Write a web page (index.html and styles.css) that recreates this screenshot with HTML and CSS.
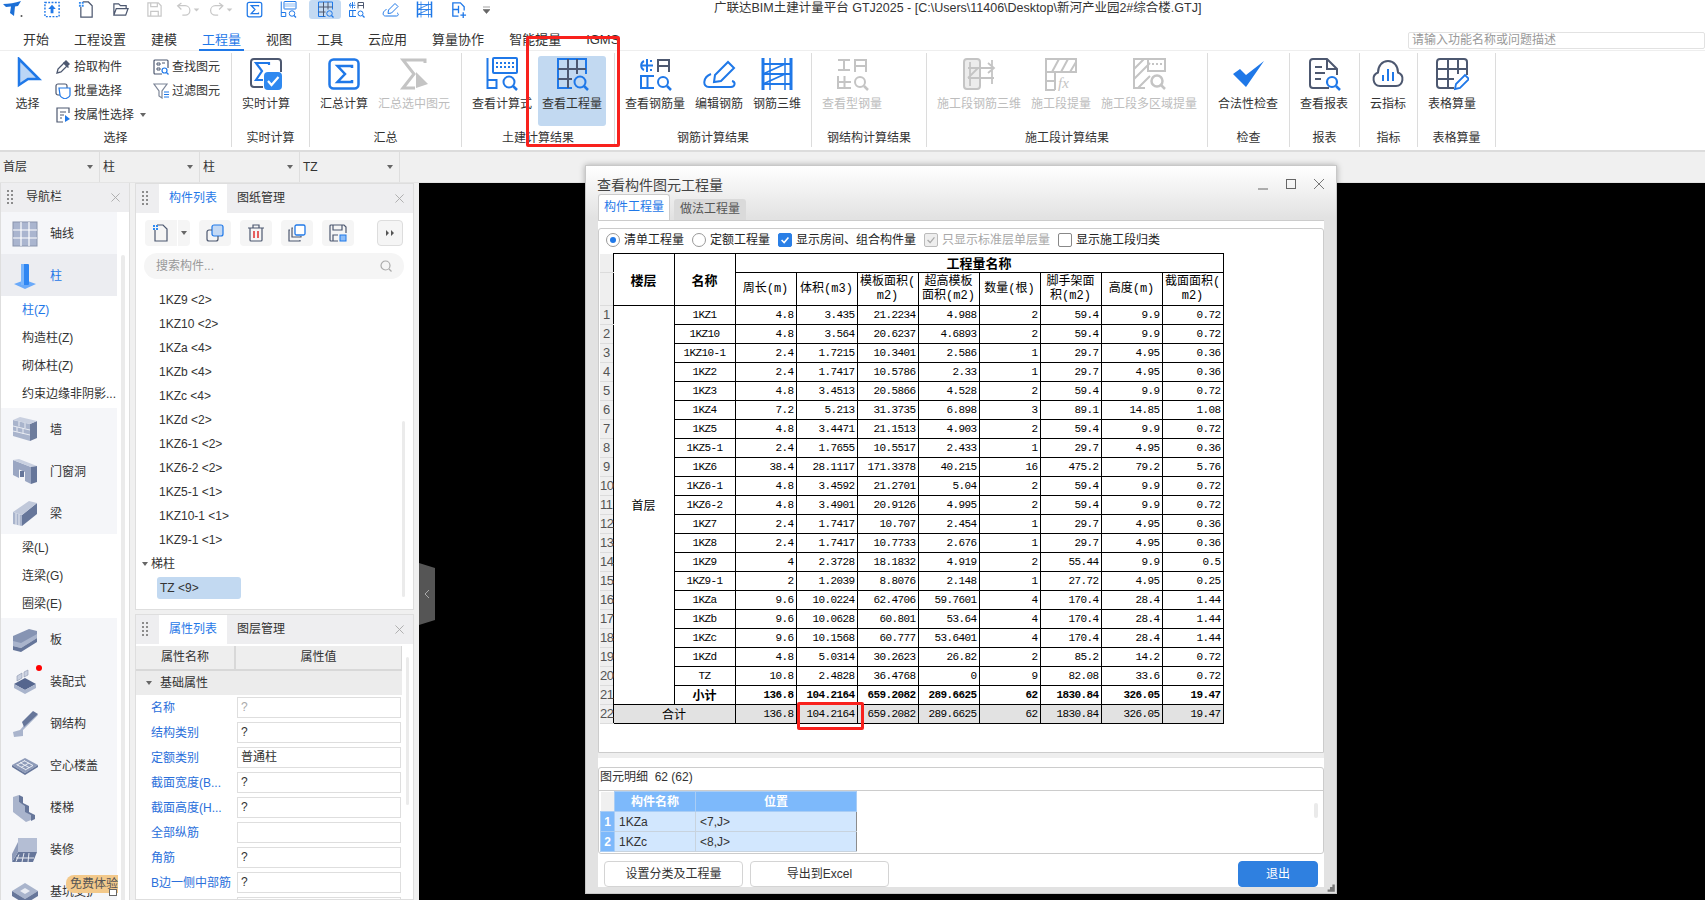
FILE: index.html
```html
<!DOCTYPE html>
<html lang="zh-CN">
<head>
<meta charset="utf-8">
<title>广联达BIM土建计量平台 GTJ2025</title>
<link rel="stylesheet" href="styles.css">
</head>
<body>
<svg class="sprite" xmlns="http://www.w3.org/2000/svg">
  <symbol id="sum" viewBox="0 0 34 34"><rect x="2.5" y="2.5" width="29" height="29" rx="4" fill="none" stroke="#1f78e8" stroke-width="2.5"/><path d="M25 11V9H10.500l7.500 8-7.500 8H25v-2" fill="none" stroke="#1f78e8" stroke-width="2.500"/></symbol>
  <symbol id="sumg" viewBox="0 0 34 34"><path d="M28 6V3H6l11 14L6 31h12" fill="none" stroke="#c4c4c4" stroke-width="3"/><path d="M19 15l12 12-12 4z" fill="#c4c4c4"/></symbol>
  <symbol id="calc" viewBox="0 0 34 34"><path d="M2.500 1v30h9v-8h-9" fill="none" stroke="#1f78e8" stroke-width="2"/><rect x="8" y="1" width="24" height="15" rx="1" fill="none" stroke="#1f78e8" stroke-width="2"/><path d="M11 5h2v2h-2zM15 5h2v2h-2zM19 5h2v2h-2zM23 5h2v2h-2zM27 5h2v2h-2zM11 9h2v2h-2zM15 9h2v2h-2zM19 9h2v2h-2zM23 9h2v2h-2zM27 9h2v2h-2z" fill="#1f78e8"/><circle cx="24" cy="25" r="5.500" fill="none" stroke="#1f78e8" stroke-width="2"/><path d="M28 29l4 4" stroke="#1f78e8" stroke-width="2.500"/></symbol>
  <symbol id="qty" viewBox="0 0 34 34"><path d="M17 31H3V2h28v15" fill="none" stroke="#1f78e8" stroke-width="2"/><path d="M3 12h28M3 22h14M13 2v29M22 2v15" fill="none" stroke="#4d5870" stroke-width="2"/><circle cx="25" cy="25" r="5.500" fill="none" stroke="#1f78e8" stroke-width="2"/><path d="M29 29l4 4" stroke="#1f78e8" stroke-width="2.500"/></symbol>
  <symbol id="rebar" viewBox="0 0 34 34"><path d="M9 2v13M3 8.500h12" stroke="#1f78e8" stroke-width="2" fill="none"/><path d="M6 4a5 5 0 0 0 0 9M12 4h2M12 13h2" stroke="#1f78e8" stroke-width="2" fill="none"/><path d="M20 15V3h11v12M20 9h11" stroke="#4d5870" stroke-width="2" fill="none"/><path d="M3 19v12h13M3 31V19h13M9.500 19v12" stroke="#1f78e8" stroke-width="2" fill="none"/><circle cx="25" cy="25" r="5" fill="none" stroke="#1f78e8" stroke-width="2"/><path d="M29 29l4 4" stroke="#1f78e8" stroke-width="2.500"/></symbol>
  <symbol id="edit" viewBox="0 0 34 34"><path d="M12 25l1-7L26 5l6 6-13 13z" fill="none" stroke="#1f78e8" stroke-width="2"/><path d="M9 17C1 20 0 30 7 30h22c4 0 5-5 1-6" fill="none" stroke="#1f78e8" stroke-width="2"/></symbol>
  <symbol id="ladder" viewBox="0 0 34 34"><path d="M3 1v32M31 1v32" stroke="#1f78e8" stroke-width="3"/><path d="M10 1v32M25 1v32" stroke="#1f78e8" stroke-width="1.500"/><path d="M3 7h28M3 17h28M3 27h28M3 17L25 7M3 27l22-10" stroke="#1f78e8" stroke-width="1.800" fill="none"/></symbol>
  <symbol id="steel" viewBox="0 0 34 34"><path d="M3 3h12M3 13h12M9 3v10M20 15V3h11v12M20 9h11M3 19v12h13M3 25h13M9.500 19v12" stroke="#c4c4c4" stroke-width="2" fill="none"/><circle cx="25" cy="25" r="5" fill="none" stroke="#c4c4c4" stroke-width="2"/><path d="M29 29l4 4" stroke="#c4c4c4" stroke-width="2.500"/></symbol>
  <symbol id="seg1" viewBox="0 0 34 34"><rect x="2" y="2" width="16" height="30" rx="3" fill="#ececec" stroke="#c4c4c4" stroke-width="2"/><path d="M8 5v24M18 5v24M30 3v24M6 11h26M6 21h26M6 21l10-10M26 6l6 5-6 5" stroke="#c4c4c4" stroke-width="1.800" fill="none"/></symbol>
  <symbol id="seg3" viewBox="0 0 34 34"><path d="M13 31H2V2h16M2 12L12 2M2 22L18 6M6 31l12-12" stroke="#c4c4c4" stroke-width="2" fill="none"/><rect x="16" y="2" width="17" height="12" fill="none" stroke="#c4c4c4" stroke-width="2"/><path d="M20 6h2v2h-2zM24 6h2v2h-2zM28 6h2v2h-2z" fill="#c4c4c4"/><circle cx="25" cy="24" r="5.500" fill="none" stroke="#c4c4c4" stroke-width="2.500"/><path d="M29 28l4 4" stroke="#c4c4c4" stroke-width="2.500"/></symbol>
  <symbol id="check" viewBox="0 0 34 34"><path d="M2 17l7-5 6 6L33 4 15 30z" fill="#1f78e8"/></symbol>
  <symbol id="report" viewBox="0 0 34 34"><path d="M22 31H6a3 3 0 0 1-3-3V5a3 3 0 0 1 3-3h14l10 10v6" fill="none" stroke="#4d5870" stroke-width="2"/><path d="M20 2v10h10M8 10h7M8 16h10M8 22h6" fill="none" stroke="#4d5870" stroke-width="2"/><circle cx="25" cy="25" r="5" fill="none" stroke="#1f78e8" stroke-width="2.200"/><path d="M29 29l4 4" stroke="#1f78e8" stroke-width="2.500"/></symbol>
  <symbol id="cloud" viewBox="0 0 34 34"><path d="M9 29a7 7 0 0 1-2-13.500C7 9 11 4 17 4s10 5 10 11.500A7 7 0 0 1 25 29z" fill="none" stroke="#4d5870" stroke-width="2"/><path d="M11 18h2v6h-2zM16 12h2v12h-2zM21 15h2v9h-2z" fill="#1f78e8"/></symbol>
  <symbol id="gridedit" viewBox="0 0 34 34"><path d="M19 31H5a3 3 0 0 1-3-3V5a3 3 0 0 1 3-3h24a3 3 0 0 1 3 3v13" fill="none" stroke="#4d5870" stroke-width="2"/><path d="M2 12h30M2 22h17M13 2v29M23 2v15" stroke="#4d5870" stroke-width="2" fill="none"/><path d="M20 32l1-5 9-9 4 4-9 9z" fill="none" stroke="#1f78e8" stroke-width="1.800"/></symbol>
  <symbol id="realtime" viewBox="0 0 34 34"><path d="M14 30H5a3 3 0 0 1-3-3V5a3 3 0 0 1 3-3h24a3 3 0 0 1 3 3v10" fill="none" stroke="#4d5870" stroke-width="2"/><path d="M20 8V6H7l6 8-6 9h7" fill="none" stroke="#1f78e8" stroke-width="2.200"/><rect x="15" y="15" width="18" height="18" rx="4" fill="#2f89f0"/><path d="M19 24l3.500 4 7-8" fill="none" stroke="#fff" stroke-width="2.200"/></symbol>
  <symbol id="grip" viewBox="0 0 8 16"><path d="M1 1h2v2H1zM5 1h2v2H5zM1 5h2v2H1zM5 5h2v2H5zM1 9h2v2H1zM5 9h2v2H5zM1 13h2v2H1zM5 13h2v2H5z" fill="#8c8c8c"/></symbol>
  <symbol id="cross" viewBox="0 0 10 10"><path d="M.500.500l9 9M9.500.500l-9 9" stroke="#a8a8a8" stroke-width="1" fill="none"/></symbol>
</svg>

<div class="app">
  <header class="qat">
    <span class="logo"><svg viewBox="0 0 20 17" width="20" height="17"><path d="M0 3C6 3 12 2 18 0l-3 5-3 .5L11 15 7 12l1-6.500L3 6z" fill="#1c6fd6"/><circle cx="18.500" cy="15" r="1" fill="#555"/></svg></span>
    <span class="q"><svg viewBox="0 0 18 18"><rect x="1" y="1.500" width="15" height="15" fill="none" stroke="#1f78e8" stroke-width="1.500" stroke-dasharray="2 1.500"/><path d="M8.500 4l4 4.500H10V13H7V8.500H4.500z" fill="#1f78e8"/></svg></span>
    <span class="q"><svg viewBox="0 0 18 18"><path d="M3 6v11h12V5l-4-4H5" fill="none" stroke="#4d5870" stroke-width="1.300"/><path d="M1 1h2v2H1zM4 1h2v2H4zM1 4h2v2H1zM4 4h2v2H4z" fill="#2f89f0"/></svg></span>
    <span class="q"><svg viewBox="0 0 18 18"><path d="M2 15V3h5l2 2h6v3M2 15l2.500-7H17l-2.500 7z" fill="none" stroke="#4d5870" stroke-width="1.300"/></svg></span>
    <span class="q"><svg viewBox="0 0 18 18"><path d="M2 2h11l3 3v11H2zM5 2v4h7V2M5 16v-5h8v5" fill="none" stroke="#c8c8c8" stroke-width="1.300"/></svg></span>
    <span class="q hist"><svg viewBox="0 0 26 18"><path d="M6 9L2 5l4-3M2 5h8a5 5 0 0 1 0 10H7" fill="none" stroke="#c8c8c8" stroke-width="1.300"/><path d="M19 8h6l-3 3z" fill="#c8c8c8"/></svg></span>
    <span class="q hist"><svg viewBox="0 0 26 18"><path d="M11 9l4-4-4-3M15 5H7a5 5 0 0 0 0 10h3" fill="none" stroke="#c8c8c8" stroke-width="1.300"/><path d="M19 8h6l-3 3z" fill="#c8c8c8"/></svg></span>
    <span class="q"><svg><use href="#sum"/></svg></span>
    <span class="q"><svg><use href="#calc"/></svg></span>
    <span class="q on"><svg><use href="#qty"/></svg></span>
    <span class="q"><svg><use href="#rebar"/></svg></span>
    <span class="q"><svg><use href="#edit"/></svg></span>
    <span class="q"><svg><use href="#ladder"/></svg></span>
    <span class="q"><svg viewBox="0 0 18 18"><path d="M9 16H3V2h8l4 4v4M3 9h6M9 5v8M11 15h6M14 12v6" fill="none" stroke="#1f78e8" stroke-width="1.400"/></svg></span>
    <span class="qmore"><svg viewBox="0 0 7 8" width="7" height="8"><path d="M0 1h7M0 3.500h7l-3.500 4z" fill="#666" stroke="#666" stroke-width=".6"/></svg></span>
    <span class="apptitle">广联达BIM土建计量平台 GTJ2025 - [C:\Users\11406\Desktop\新河产业园2#综合楼.GTJ]</span>
  </header>

  <nav class="tabs">
    <span class="tab">开始</span><span class="tab">工程设置</span><span class="tab">建模</span><span class="tab active">工程量</span><span class="tab">视图</span><span class="tab">工具</span><span class="tab">云应用</span><span class="tab">算量协作</span><span class="tab">智能提量</span><span class="tab">IGMS</span>
    <span class="fsearch">请输入功能名称或问题描述</span>
  </nav>

  <section class="ribbon">
    <div class="grp g1">
      <div class="grow">
        <div class="btn sel"><svg class="ic" viewBox="0 0 34 34"><path d="M8 2l20 20H17l-9 6z" fill="#bcd6f6" stroke="#1f78e8" stroke-width="2.500"/></svg><span>选择</span></div>
        <div class="tools t1">
          <div class="tool"><svg viewBox="0 0 16 16"><path d="M2 14l1-4 6-6 3 3-6 6z" fill="none" stroke="#4d5870" stroke-width="1.300"/><path d="M9 3l2-2 4 4-2 2 1 1-1 1-5-5 1-1z" fill="#4d5870"/></svg><span>拾取构件</span></div>
          <div class="tool"><svg viewBox="0 0 16 16"><rect x="1" y="1" width="11" height="11" rx="2" fill="none" stroke="#4d5870" stroke-width="1.200"/><path d="M4 5h11v7c0 2-3 3-5 4-2-1-5-2-5-4z" fill="#fff" stroke="#1f78e8" stroke-width="1.200"/></svg><span>批量选择</span></div>
          <div class="tool"><svg viewBox="0 0 16 16"><path d="M14 6V1H2v14h6M5 5h6M5 8h4M5 11h2" fill="none" stroke="#4d5870" stroke-width="1.200"/><path d="M10 8l5 4-5 3z" fill="#1f78e8"/></svg><span>按属性选择</span><i class="caret"></i></div>
        </div>
        <div class="tools t2">
          <div class="tool"><svg viewBox="0 0 16 16"><path d="M9 15H2a1 1 0 0 1-1-1V2a1 1 0 0 1 1-1h12a1 1 0 0 1 1 1v7" fill="none" stroke="#4d5870" stroke-width="1.200"/><path d="M4 4h3v2H4zM9 4h3M4 9h3v2H4z" fill="none" stroke="#4d5870"/><circle cx="11.500" cy="11.500" r="2.500" fill="none" stroke="#1f78e8" stroke-width="1.200"/><path d="M13.500 13.500l2 2" stroke="#1f78e8" stroke-width="1.200"/></svg><span>查找图元</span></div>
          <div class="tool"><svg viewBox="0 0 16 16"><path d="M1 1h13L9 8v7L6 13V8z" fill="none" stroke="#7d8698" stroke-width="1.200"/><path d="M11 9h5M11 11.500h5M11 14h5" stroke="#1f78e8" stroke-width="1.200"/></svg><span>过滤图元</span></div>
        </div>
      </div>
      <div class="glabel">选择</div>
    </div>
    <div class="grp g2"><div class="grow"><div class="btn"><svg class="ic"><use href="#realtime"/></svg><span>实时计算</span></div></div><div class="glabel">实时计算</div></div>
    <div class="grp g3"><div class="grow"><div class="btn"><svg class="ic"><use href="#sum"/></svg><span>汇总计算</span></div><div class="btn off"><svg class="ic"><use href="#sumg"/></svg><span>汇总选中图元</span></div></div><div class="glabel">汇总</div></div>
    <div class="grp g4"><div class="grow"><div class="btn"><svg class="ic"><use href="#calc"/></svg><span>查看计算式</span></div><div class="btn on"><svg class="ic"><use href="#qty"/></svg><span>查看工程量</span></div></div><div class="glabel">土建计算结果</div></div>
    <div class="grp g5"><div class="grow"><div class="btn"><svg class="ic"><use href="#rebar"/></svg><span>查看钢筋量</span></div><div class="btn"><svg class="ic"><use href="#edit"/></svg><span>编辑钢筋</span></div><div class="btn"><svg class="ic"><use href="#ladder"/></svg><span>钢筋三维</span></div></div><div class="glabel">钢筋计算结果</div></div>
    <div class="grp g6"><div class="grow"><div class="btn off"><svg class="ic"><use href="#steel"/></svg><span>查看型钢量</span></div></div><div class="glabel">钢结构计算结果</div></div>
    <div class="grp g7"><div class="grow"><div class="btn off"><svg class="ic"><use href="#seg1"/></svg><span>施工段钢筋三维</span></div><div class="btn off"><svg class="ic" viewBox="0 0 34 34"><path d="M2 2h30v13H2zM2 15v18h9M11 15v18M2 24h9M8 15L15 2M17 15L24 2M26 15l6-10" stroke="#c4c4c4" stroke-width="2" fill="none"/><text x="14" y="31" class="fx">fx</text></svg><span>施工段提量</span></div><div class="btn off"><svg class="ic"><use href="#seg3"/></svg><span>施工段多区域提量</span></div></div><div class="glabel">施工段计算结果</div></div>
    <div class="grp g8"><div class="grow"><div class="btn"><svg class="ic"><use href="#check"/></svg><span>合法性检查</span></div></div><div class="glabel">检查</div></div>
    <div class="grp g9"><div class="grow"><div class="btn"><svg class="ic"><use href="#report"/></svg><span>查看报表</span></div></div><div class="glabel">报表</div></div>
    <div class="grp g10"><div class="grow"><div class="btn"><svg class="ic"><use href="#cloud"/></svg><span>云指标</span></div></div><div class="glabel">指标</div></div>
    <div class="grp g11"><div class="grow"><div class="btn"><svg class="ic"><use href="#gridedit"/></svg><span>表格算量</span></div></div><div class="glabel">表格算量</div></div>
  </section>

  <div class="combos">
    <div class="combo">首层<i class="caret"></i></div>
    <div class="combo">柱<i class="caret"></i></div>
    <div class="combo">柱<i class="caret"></i></div>
    <div class="combo">TZ<i class="caret"></i></div>
  </div>

  <main class="work">
    <aside class="navp">
      <div class="phead"><svg class="grip"><use href="#grip"/></svg><span class="ptitle">导航栏</span><svg class="pclose"><use href="#cross"/></svg></div>
      <div class="navbody">
        <div class="navlist">
          <div class="ni"><svg viewBox="0 0 28 28"><rect x="2" y="2" width="24" height="24" fill="#aab5cf" stroke="#8a94ad"/><path d="M10 2v24M18 2v24M2 10h24M2 18h24" stroke="#fff" stroke-width="1.200"/></svg><span>轴线</span></div>
          <div class="ni cur"><svg viewBox="0 0 28 28"><path d="M3 22l11-4 11 4-11 5z" fill="#6aaafa"/><rect x="10" y="2" width="8" height="21" rx="1" fill="#2f86f2"/><rect x="10" y="2" width="3" height="21" fill="#7ab5fb"/></svg><span class="blue">柱</span></div>
          <div class="si blue">柱(Z)</div>
          <div class="si">构造柱(Z)</div>
          <div class="si">砌体柱(Z)</div>
          <div class="si">约束边缘非阴影...</div>
          <div class="ni"><svg viewBox="0 0 28 28"><path d="M2 4l17 4v17L2 20z" fill="#a9b4cc"/><path d="M19 8l7-3v17l-7 3z" fill="#6d7c9c"/><path d="M2 4l7-3 17 4-7 3z" fill="#c9d0e0"/><path d="M2 10l17 4M2 15l17 4M8 5.500v5M14 7v5M6 11v5M12 12v6" stroke="#e9ecf3" fill="none"/></svg><span>墙</span></div>
          <div class="ni"><svg viewBox="0 0 28 28"><path d="M2 2l18 7v17L14 23V14l-6-2.500V20L2 17z" fill="#9aa6c2"/><path d="M2 2l6-1 18 7-6 1z" fill="#c9d0e0"/><path d="M20 9l6-1v16l-6 2z" fill="#66769a"/><rect x="9" y="13" width="4" height="6" fill="#66769a"/></svg><span>门窗洞</span></div>
          <div class="ni"><svg viewBox="0 0 28 28"><path d="M2 12l9 3v11l-9-2z" fill="#a9b4cc"/><path d="M11 15l15-12v11L11 26z" fill="#66769a"/><path d="M2 12L18 1l8 2-15 12z" fill="#c0c8da"/><path d="M5 13v12M8 14v12" stroke="#e9ecf3"/></svg><span>梁</span></div>
          <div class="si">梁(L)</div>
          <div class="si">连梁(G)</div>
          <div class="si">圈梁(E)</div>
          <div class="ni"><svg viewBox="0 0 28 28"><path d="M2 10L18 3l8 2v4L10 18l-8-2z" fill="#8694b3"/><path d="M2 15l8 2 16-9v4L10 22l-8-2z" fill="#a9b4cc"/><path d="M2 20l8 2 16-10v4L10 26l-8-2z" fill="#66769a"/></svg><span>板</span></div>
          <div class="ni"><i class="dot"></i><svg viewBox="0 0 28 28"><path d="M3 16l11-6 11 6-11 6z" fill="#55668e"/><path d="M3 16l11 6v4L3 20zM25 16v4l-11 6v-4z" fill="#a9b4cc"/><path d="M6 8l5-3v5l-5 3zM13 4l4-2v5l-4 2z" fill="#c9d0e0" stroke="#8a94ad" stroke-width=".6"/></svg><span>装配式</span></div>
          <div class="ni"><svg viewBox="0 0 28 28"><path d="M2 22l7-2L24 3l3 2-15 15v6l-9 1z" fill="#a9b4cc"/><path d="M11 12L22 1l5 3-14 13z" fill="#66769a"/></svg><span>钢结构</span></div>
          <div class="ni"><svg viewBox="0 0 28 28"><path d="M1 13L14 6l13 7-13 8z" fill="#8e9bb9"/><path d="M1 13v2l13 8 13-8v-2l-13 8z" fill="#66769a"/><path d="M6 13l8-4.500M10 15.500l8-4.500M14 18l8-4.500M9 10.500l9 5M5.500 12.500l9 5M13 8.500l9 5" stroke="#e9ecf3" fill="none"/></svg><span>空心楼盖</span></div>
          <div class="ni"><svg viewBox="0 0 28 28"><path d="M2 3l6-2v7l6 3v6l6 3v6l-5 2L2 18z" fill="#a9b4cc"/><path d="M8 1l4 2v6l6 3v6l6 3v4l-4 2v-6l-6-3v-6L8 8z" fill="#66769a"/></svg><span>楼梯</span></div>
          <div class="ni"><svg viewBox="0 0 28 28"><path d="M7 2h19v14H7z" fill="#b4bed4"/><path d="M1 26l6-10h19l-4 10z" fill="#66769a"/><path d="M5 22h18M8 18.500l-3 7M13 17l-2 9M18 17l-1 9" stroke="#e9ecf3" fill="none"/><path d="M1 26V18l6-12v10z" fill="#8e9bb9"/></svg><span>装修</span></div>
          <div class="ni"><svg viewBox="0 0 28 28"><path d="M1 13L14 5l13 8-13 8z" fill="#a9b4cc"/><path d="M1 13v5l13 8v-5zM27 13v5l-13 8v-5z" fill="#66769a"/><path d="M9 13l5-3 5 3-5 3z" fill="#e9ecf3"/></svg><span>基坑支护</span></div>
        </div>
        <div class="navbar"></div>
      </div>
      <div class="trial">免费体验<i class="lock"></i></div>
    </aside>

    <div class="midcol">
      <section class="mpanel top">
        <div class="phead"><svg class="grip"><use href="#grip"/></svg><span class="ptab active">构件列表</span><span class="ptab">图纸管理</span><svg class="pclose"><use href="#cross"/></svg></div>
        <div class="tbar">
          <span class="tb"><svg viewBox="0 0 18 18"><path d="M3 6v11h12V5l-4-4H5" fill="none" stroke="#4d5870" stroke-width="1.200"/><path d="M1 1h2v2H1zM4 1h2v2H4zM1 4h2v2H1zM4 4h2v2H4z" fill="#2f89f0"/></svg></span><span class="tb arr"><i class="caret"></i></span>
          <span class="tb"><svg viewBox="0 0 18 18"><rect x="6" y="1" width="11" height="11" rx="2" fill="#c3d9f5" stroke="#1f78e8" stroke-width="1.200"/><path d="M6 6H3a2 2 0 0 0-2 2v7a2 2 0 0 0 2 2h7a2 2 0 0 0 2-2v-3" fill="none" stroke="#4d5870" stroke-width="1.200"/></svg></span>
          <span class="tb"><svg viewBox="0 0 18 18"><path d="M1 4h16M6 4V1h6v3M3 4v12a1 1 0 0 0 1 1h10a1 1 0 0 0 1-1V4" fill="none" stroke="#4d5870" stroke-width="1.200"/><path d="M7 7v7M11 7v7" stroke="#e02020" stroke-width="1.400"/></svg></span>
          <span class="tb"><svg viewBox="0 0 18 18"><rect x="7" y="1" width="10" height="10" rx="1.500" fill="#fff" stroke="#1f78e8" stroke-width="1.300"/><path d="M5 4H4v9h9v-1M2 6H1v11h11v-1" fill="none" stroke="#4d5870" stroke-width="1.200"/></svg></span>
          <span class="tb"><svg viewBox="0 0 18 18"><path d="M17 9V3l-2-2H2a1 1 0 0 0-1 1v14a1 1 0 0 0 1 1h7M4 1v5h9V1M4 17v-6h5" fill="none" stroke="#4d5870" stroke-width="1.200"/><rect x="11" y="11" width="6" height="6" fill="#8dbdf7" stroke="#1f78e8"/></svg></span>
          <span class="tb more"><svg viewBox="0 0 10 8" width="10" height="8"><path d="M1 1l3 3-3 3zM6 1l3 3-3 3z" fill="#555"/></svg></span>
        </div>
        <div class="msearch"><span>搜索构件...</span><svg viewBox="0 0 12 12" width="12" height="12"><circle cx="5.500" cy="5.500" r="4.500" fill="none" stroke="#aaa" stroke-width="1.200"/><path d="M9 9l2.500 2.500" stroke="#aaa" stroke-width="1.200"/></svg></div>
        <div class="lwrap">
          <div class="list">
            <div class="li">1KZ9 &lt;2&gt;</div>
            <div class="li">1KZ10 &lt;2&gt;</div>
            <div class="li">1KZa &lt;4&gt;</div>
            <div class="li">1KZb &lt;4&gt;</div>
            <div class="li">1KZc &lt;4&gt;</div>
            <div class="li">1KZd &lt;2&gt;</div>
            <div class="li">1KZ6-1 &lt;2&gt;</div>
            <div class="li">1KZ6-2 &lt;2&gt;</div>
            <div class="li">1KZ5-1 &lt;1&gt;</div>
            <div class="li">1KZ10-1 &lt;1&gt;</div>
            <div class="li">1KZ9-1 &lt;1&gt;</div>
            <div class="lg"><i class="caret"></i>梯柱</div>
            <div class="lsel">TZ &lt;9&gt;</div>
          </div>
          <div class="lbar"></div>
        </div>
      </section>
      <section class="mpanel bottom">
        <div class="phead"><svg class="grip"><use href="#grip"/></svg><span class="ptab active">属性列表</span><span class="ptab">图层管理</span><svg class="pclose"><use href="#cross"/></svg></div>
        <div class="pwrap">
          <div class="props">
            <div class="phd"><span>属性名称</span><span>属性值</span></div>
            <div class="psec"><i class="caret"></i>基础属性</div>
            <div class="pr"><label>名称</label><span class="val mute">?</span></div>
            <div class="pr"><label>结构类别</label><span class="val">?</span></div>
            <div class="pr"><label>定额类别</label><span class="val">普通柱</span></div>
            <div class="pr"><label>截面宽度(B...</label><span class="val">?</span></div>
            <div class="pr"><label>截面高度(H...</label><span class="val">?</span></div>
            <div class="pr"><label>全部纵筋</label><span class="val"></span></div>
            <div class="pr"><label>角筋</label><span class="val">?</span></div>
            <div class="pr"><label>B边一侧中部筋</label><span class="val">?</span></div>
            <div class="pr"><label></label><span class="val"></span></div>
          </div>
          <div class="pbar"></div>
        </div>
      </section>
    </div>

    <div class="canvas"><div class="handle"><svg viewBox="0 0 6 10" width="6" height="10"><path d="M5 1L1 5l4 4" fill="none" stroke="#aaa"/></svg></div></div>
  </main>

  <section class="dlg">
    <div class="dtitle"><span>查看构件图元工程量</span>
      <div class="wbtns">
        <svg viewBox="0 0 12 12"><path d="M1 11h10" stroke="#666"/></svg>
        <svg viewBox="0 0 12 12"><rect x="1.500" y="1.500" width="9" height="9" fill="none" stroke="#666"/></svg>
        <svg viewBox="0 0 12 12"><path d="M1 1l10 10M11 1L1 11" stroke="#777" fill="none"/></svg>
      </div>
    </div>
    <div class="dtabs"><span class="dtab active">构件工程量</span><span class="dtab">做法工程量</span></div>
    <div class="dbody">
      <div class="upper">
        <div class="opts">
          <span class="radio on"></span><span class="olbl">清单工程量</span>
          <span class="radio"></span><span class="olbl">定额工程量</span>
          <span class="cb on"><svg viewBox="0 0 14 14"><path d="M3 7l3 3 5-6" fill="none" stroke="#fff" stroke-width="1.800"/></svg></span><span class="olbl">显示房间、组合构件量</span>
          <span class="cb dis"><svg viewBox="0 0 14 14"><path d="M3 7l3 3 5-6" fill="none" stroke="#aaa" stroke-width="1.500"/></svg></span><span class="olbl gr">只显示标准层单层量</span>
          <span class="cb"></span><span class="olbl">显示施工段归类</span>
        </div>
        <table class="qt">
          <colgroup><col class="c0"><col class="c1"><col class="c1"><col class="c1"><col class="c1"><col class="c1"><col class="c1"><col class="c1"><col class="c1"><col class="c1"><col class="c1"></colgroup>
          <thead>
            <tr class="h1"><th class="rn"></th><th rowspan="2" class="hb">楼层</th><th rowspan="2" class="hb">名称</th><th colspan="8" class="hb">工程量名称</th></tr>
            <tr class="h2"><th class="rn"></th><th>周长(m)</th><th>体积(m3)</th><th>模板面积(<br>m2)</th><th>超高模板<br>面积(m2)</th><th>数量(根)</th><th>脚手架面<br>积(m2)</th><th>高度(m)</th><th>截面面积(<br>m2)</th></tr>
          </thead>
          <tbody>
            <tr><th class="rn">1</th><td rowspan="21" class="fl">首层</td><td class="n">1KZ1</td><td>4.8</td><td>3.435</td><td>21.2234</td><td>4.988</td><td>2</td><td>59.4</td><td>9.9</td><td>0.72</td></tr>
            <tr><th class="rn">2</th><td class="n">1KZ10</td><td>4.8</td><td>3.564</td><td>20.6237</td><td>4.6893</td><td>2</td><td>59.4</td><td>9.9</td><td>0.72</td></tr>
            <tr><th class="rn">3</th><td class="n">1KZ10-1</td><td>2.4</td><td>1.7215</td><td>10.3401</td><td>2.586</td><td>1</td><td>29.7</td><td>4.95</td><td>0.36</td></tr>
            <tr><th class="rn">4</th><td class="n">1KZ2</td><td>2.4</td><td>1.7417</td><td>10.5786</td><td>2.33</td><td>1</td><td>29.7</td><td>4.95</td><td>0.36</td></tr>
            <tr><th class="rn">5</th><td class="n">1KZ3</td><td>4.8</td><td>3.4513</td><td>20.5866</td><td>4.528</td><td>2</td><td>59.4</td><td>9.9</td><td>0.72</td></tr>
            <tr><th class="rn">6</th><td class="n">1KZ4</td><td>7.2</td><td>5.213</td><td>31.3735</td><td>6.898</td><td>3</td><td>89.1</td><td>14.85</td><td>1.08</td></tr>
            <tr><th class="rn">7</th><td class="n">1KZ5</td><td>4.8</td><td>3.4471</td><td>21.1513</td><td>4.903</td><td>2</td><td>59.4</td><td>9.9</td><td>0.72</td></tr>
            <tr><th class="rn">8</th><td class="n">1KZ5-1</td><td>2.4</td><td>1.7655</td><td>10.5517</td><td>2.433</td><td>1</td><td>29.7</td><td>4.95</td><td>0.36</td></tr>
            <tr><th class="rn">9</th><td class="n">1KZ6</td><td>38.4</td><td>28.1117</td><td>171.3378</td><td>40.215</td><td>16</td><td>475.2</td><td>79.2</td><td>5.76</td></tr>
            <tr><th class="rn">10</th><td class="n">1KZ6-1</td><td>4.8</td><td>3.4592</td><td>21.2701</td><td>5.04</td><td>2</td><td>59.4</td><td>9.9</td><td>0.72</td></tr>
            <tr><th class="rn">11</th><td class="n">1KZ6-2</td><td>4.8</td><td>3.4901</td><td>20.9126</td><td>4.995</td><td>2</td><td>59.4</td><td>9.9</td><td>0.72</td></tr>
            <tr><th class="rn">12</th><td class="n">1KZ7</td><td>2.4</td><td>1.7417</td><td>10.707</td><td>2.454</td><td>1</td><td>29.7</td><td>4.95</td><td>0.36</td></tr>
            <tr><th class="rn">13</th><td class="n">1KZ8</td><td>2.4</td><td>1.7417</td><td>10.7733</td><td>2.676</td><td>1</td><td>29.7</td><td>4.95</td><td>0.36</td></tr>
            <tr><th class="rn">14</th><td class="n">1KZ9</td><td>4</td><td>2.3728</td><td>18.1832</td><td>4.919</td><td>2</td><td>55.44</td><td>9.9</td><td>0.5</td></tr>
            <tr><th class="rn">15</th><td class="n">1KZ9-1</td><td>2</td><td>1.2039</td><td>8.8076</td><td>2.148</td><td>1</td><td>27.72</td><td>4.95</td><td>0.25</td></tr>
            <tr><th class="rn">16</th><td class="n">1KZa</td><td>9.6</td><td>10.0224</td><td>62.4706</td><td>59.7601</td><td>4</td><td>170.4</td><td>28.4</td><td>1.44</td></tr>
            <tr><th class="rn">17</th><td class="n">1KZb</td><td>9.6</td><td>10.0628</td><td>60.801</td><td>53.64</td><td>4</td><td>170.4</td><td>28.4</td><td>1.44</td></tr>
            <tr><th class="rn">18</th><td class="n">1KZc</td><td>9.6</td><td>10.1568</td><td>60.777</td><td>53.6401</td><td>4</td><td>170.4</td><td>28.4</td><td>1.44</td></tr>
            <tr><th class="rn">19</th><td class="n">1KZd</td><td>4.8</td><td>5.0314</td><td>30.2623</td><td>26.82</td><td>2</td><td>85.2</td><td>14.2</td><td>0.72</td></tr>
            <tr><th class="rn">20</th><td class="n">TZ</td><td>10.8</td><td>2.4828</td><td>36.4768</td><td>0</td><td>9</td><td>82.08</td><td>33.6</td><td>0.72</td></tr>
            <tr class="sub"><th class="rn">21</th><td class="n cj">小计</td><td>136.8</td><td>104.2164</td><td>659.2082</td><td>289.6625</td><td>62</td><td>1830.84</td><td>326.05</td><td>19.47</td></tr>
            <tr class="tot"><th class="rn">22</th><td colspan="2" class="n cj">合计</td><td>136.8</td><td>104.2164</td><td>659.2082</td><td>289.6625</td><td>62</td><td>1830.84</td><td>326.05</td><td>19.47</td></tr>
          </tbody>
        </table>
      </div>
      <div class="band"></div>
      <div class="lower">
        <div class="ltitle">图元明细&nbsp; 62 (62)</div>
        <div class="gridwrap">
          <table class="dg">
            <colgroup><col class="d0"><col class="d1"><col class="d2"></colgroup>
            <tr><th class="corner"></th><th>构件名称</th><th>位置</th></tr>
            <tr><th>1</th><td>1KZa</td><td>&lt;7,J&gt;</td></tr>
            <tr><th>2</th><td>1KZc</td><td>&lt;8,J&gt;</td></tr>
          </table>
          <div class="gbar"></div>
        </div>
      </div>
      <div class="dfoot"><span class="fbtn">设置分类及工程量</span><span class="fbtn">导出到Excel</span><span class="fbtn pri">退出</span></div>
    </div>
    <svg class="rsz" viewBox="0 0 9 9"><path d="M6 0h3v3H6zM3 3h3v3H3zM6 3h3v3H6zM0 6h3v3H0zM3 6h3v3H3zM6 6h3v3H6z" fill="#777" transform="scale(.8) translate(2 2)"/></svg>
  </section>

  <div class="mark m1"></div>
  <div class="mark m2"></div>
</div>
</body>
</html>
```

FILE: styles.css
```css
* { box-sizing: border-box; }
html, body { margin: 0; padding: 0; }
body {
  width: 1705px; height: 900px; overflow: hidden; background: #fff; color: #333;
  font: 12px/16px "Liberation Sans", "Noto Sans CJK SC", sans-serif;
}
.sprite { position: absolute; width: 0; height: 0; overflow: hidden; }
.app { position: relative; width: 1705px; height: 900px; display: flex; flex-direction: column; overflow: hidden; }
i { font-style: normal; }
.caret { display: inline-block; width: 0; height: 0; border: 3px solid transparent; border-top: 4px solid #666; border-bottom: 0; }

/* quick access */
.qat { height: 31px; display: flex; align-items: flex-start; flex: none; }
.logo { width: 35px; height: 19px; display: flex; align-items: center; padding-left: 3px; }
.q { width: 34px; height: 19px; display: flex; align-items: center; justify-content: center; border-radius: 3px; flex: none; }
.q svg { width: 17px; height: 17px; }
.q.hist { width: 33px; }
.q.hist svg { width: 26px; height: 17px; }
.q.on { background: #c4daf2; margin: 0 -2px 0 4px; width: 32px; }
.qmore { width: 18px; height: 19px; margin-left: 2px; display: flex; align-items: center; justify-content: center; flex: none; }
.apptitle { margin-left: 219px; font-size: 12.500px; color: #333; white-space: nowrap; }

/* tabs */
.tabs { height: 20px; flex: none; display: flex; gap: 19px; padding-left: 20px; font-size: 13px; line-height: 18px; border-bottom: 1px solid #eee; }
.tab { padding: 0 3px; height: 20px; color: #333; border-bottom: 2px solid transparent; white-space: nowrap; }
.tab.active { color: #1f78e8; border-bottom-color: #1f78e8; }
.fsearch { margin-left: auto; width: 297px; height: 17px; margin-top: 1px; border: 1px solid #e2e2e2; border-radius: 2px; padding-left: 3px; font-size: 12px; line-height: 15px; color: #999; }

/* ribbon */
.ribbon { height: 101px; flex: none; display: flex; padding-top: 2px; border-bottom: 2px solid #dcdcdc; }
.grp { height: 94px; padding-left: 6px; border-right: 1px solid #dcdcdc; display: flex; flex-direction: column; flex: none; }
.g1 { width: 232px; padding-left: 0; } .g2 { width: 78px; } .g3 { width: 152px; } .g4 { width: 153px; }
.g5 { width: 197px; } .g6 { width: 115px; } .g7 { width: 281px; } .g8 { width: 82px; }
.g9 { width: 70px; } .g10 { width: 58px; } .g11 { width: 78px; }
.grow { height: 76px; padding-top: 3px; display: flex; gap: 2px; flex: none; }
.g1 .grow { gap: 0; }
.glabel { height: 18px; margin-left: -6px; text-align: center; line-height: 18px; color: #333; }
.g1 .glabel { margin-left: 0; }
.btn { height: 70px; padding: 0 4px; display: flex; flex-direction: column; align-items: center; border-radius: 3px; color: #333; white-space: nowrap; flex: none; }
.btn .ic { width: 34px; height: 34px; margin-top: 1px; margin-bottom: 5px; flex: none; }
.btn.on { background: #c2d9f1; }
.btn.off { color: #bdbdbd; }
.btn.sel { width: 55px; }
.tools { padding-top: 2px; display: flex; flex-direction: column; gap: 7px; flex: none; }
.t1 { width: 98px; } .t2 { width: 78px; }
.tool { height: 17px; display: flex; align-items: center; gap: 3px; white-space: nowrap; }
.tool svg { width: 16px; height: 16px; flex: none; }
.tool .caret { margin-left: 3px; }
.fx { font: italic 15px "Liberation Serif", serif; fill: #c4c4c4; }

/* combos */
.combos { height: 31px; flex: none; display: flex; background: #f0f0f0; border-bottom: 1px solid #e4e4e4; }
.combo { width: 100px; padding-left: 3px; line-height: 30px; font-size: 12px; border-right: 1px solid #dedede; display: flex; align-items: center; justify-content: space-between; padding-right: 6px; }

/* workspace */
.work { flex: 1; display: flex; background: #f0f0f0; min-height: 0; }
.navp { position: relative; width: 130px; background: #fff; border-left: 1px solid #dedede; border-right: 1px solid #dedede; flex: none; }
.phead { height: 29px; background: #eeeef0; display: flex; align-items: stretch; position: relative; flex: none; }
.grip { width: 8px; height: 16px; margin: 6px 0 0 5px; flex: none; }
.ptitle { margin-left: 12px; line-height: 29px; }
.pclose { position: absolute; right: 9px; top: 10px; width: 9px; height: 9px; }
.navbody { display: flex; }
.navlist { width: 116px; flex: none; }
.ni { position: relative; height: 42px; padding: 1px 0 0 10px; display: flex; align-items: center; gap: 11px; background: #f5f6f9; }
.ni svg { width: 28px; height: 28px; flex: none; }
.ni.cur { background: #ecedf1; }
.si { height: 28px; line-height: 28px; padding-left: 21px; white-space: nowrap; background: #fff; }
.blue { color: #1f78e8; }
.navbar { width: 4px; margin: 43px 0 0 4px; height: 700px; background: #ebebeb; border-radius: 2px; }
.dot { position: absolute; left: 35px; top: 5px; width: 6px; height: 6px; border-radius: 50%; background: #f00; }
.trial { position: absolute; left: 65px; top: 692px; width: 52px; height: 18px; border-radius: 8px 0 0 8px; background: #f3c98b; color: #555; font-size: 12px; line-height: 18px; text-align: right; white-space: nowrap; overflow: visible; }
.lock { position: absolute; right: 1px; top: 14px; width: 8px; height: 7px; border: 1px solid #666; background: #fff; }

.midcol { width: 279px; margin-left: 5px; flex: none; display: flex; flex-direction: column; gap: 4px; }
.mpanel { background: #fff; border: 1px solid #dedede; display: flex; flex-direction: column; }
.mpanel.top { height: 427px; }
.mpanel.bottom { flex: 1; min-height: 0; overflow: hidden; }
.phead .grip { margin-left: 5px; }
.ptab { width: 68px; text-align: center; line-height: 29px; font-size: 12px; }
.ptab.active { background: #fff; color: #1f78e8; }
.phead .ptab:nth-of-type(1) { margin-left: 10px; }
.tbar { height: 26px; margin-top: 7px; padding-left: 9px; display: flex; flex: none; gap: 9px; }
.tb { width: 32px; height: 26px; background: #f5f5f5; border-radius: 4px; display: flex; align-items: center; justify-content: center; }
.tb svg { width: 18px; height: 18px; }
.tb:first-child { border-radius: 4px 0 0 4px; margin-right: -8px; }
.tb.arr { width: 12px; border-radius: 0 4px 4px 0; margin-right: 0; }
.tb.more { width: 26px; margin-left: 14px; border: 1px solid #ddd; }
.tb.more svg { width: 10px; height: 8px; }
.msearch { height: 26px; margin: 7px 9px 0 8px; flex: none; border-radius: 13px; background: #f5f5f5; color: #999; padding: 0 12px; display: flex; align-items: center; justify-content: space-between; }
.lwrap { flex: 1; display: flex; margin-top: 9px; min-height: 0; }
.list { flex: 1; }
.li { height: 24px; line-height: 24px; padding-left: 23px; white-space: nowrap; }
.lg { height: 24px; line-height: 24px; padding-left: 6px; display: flex; align-items: center; gap: 3px; }
.lsel { height: 22px; width: 84px; margin: 1px 0 0 21px; padding-left: 3px; line-height: 22px; border-radius: 3px; background: #c2d9f1; }
.lbar { width: 3px; margin: 133px 8px 0 0; height: 176px; background: #ebebeb; border-radius: 2px; }

.pwrap { flex: 1; display: flex; min-height: 0; }
.props { width: 266px; flex: none; }
.phd { height: 25px; margin-top: 2px; display: flex; background: #eeeeee; border-bottom: 2px solid #d8d8d8; border-right: 1px solid #d8d8d8; }
.phd span { text-align: center; line-height: 23px; }
.phd span:first-child { width: 100px; border-right: 2px solid #d8d8d8; }
.phd span:last-child { flex: 1; }
.psec { height: 24px; background: #ececec; line-height: 24px; padding-left: 10px; display: flex; align-items: center; gap: 8px; }
.pr { height: 25px; display: flex; align-items: center; }
.pr label { width: 101px; padding-left: 15px; color: #2a6fdb; white-space: nowrap; overflow: hidden; flex: none; }
.val { width: 164px; height: 21px; border: 1px solid #dedede; padding-left: 3px; line-height: 19px; }
.val.mute { color: #aaa; }
.pbar { width: 3px; height: 148px; margin: 13px 0 0 4px; background: #ebebeb; border-radius: 2px; }

.canvas { position: relative; flex: 1; margin-left: 5px; background: #000; }
.handle { position: absolute; left: 0; top: 380px; width: 16px; height: 62px; background: #555; clip-path: polygon(0 0, 100% 8%, 100% 92%, 0 100%); display: flex; align-items: center; justify-content: center; }

/* dialog */
.dlg { position: absolute; left: 585px; top: 165px; width: 752px; height: 729px; background: linear-gradient(#fff 0, #e2e2e2 52px); border: 1px solid #c8c8c8; box-shadow: 0 0 6px rgba(0,0,0,.3); display: flex; flex-direction: column; }
.dtitle { height: 28px; flex: none; padding: 11px 0 0 11px; font-size: 14px; line-height: 16px; color: #444; position: relative; }
.wbtns { position: absolute; right: 11px; top: 12px; display: flex; gap: 16px; }
.wbtns svg { width: 12px; height: 12px; }
.dtabs { height: 26px; flex: none; margin-left: 12px; display: flex; align-items: flex-end; gap: 4px; }
.dtab { width: 72px; height: 21px; text-align: center; line-height: 20px; background: #dadada; color: #555; border-radius: 3px 3px 0 0; }
.dtab.active { height: 26px; line-height: 24px; background: #fff; color: #1f78e8; border: 1px solid #ccc; border-bottom: 0; }
.dbody { width: 726px; height: 667px; margin-left: 12px; background: #fff; border-top: 1px solid #ccc; display: flex; flex-direction: column; flex: none; padding-top: 7px; position: relative; }
.upper { height: 525px; flex: none; border: 1px solid #ccc; border-radius: 3px 3px 0 0; overflow: hidden; }
.opts { height: 24px; display: flex; align-items: center; padding: 0 0 2px 7px; }
.radio { width: 14px; height: 14px; border: 1px solid #999; border-radius: 50%; flex: none; background: #fff; position: relative; }
.radio.on::after { content: ""; position: absolute; left: 3px; top: 3px; width: 6px; height: 6px; border-radius: 50%; background: #1f78e8; }
.cb { width: 14px; height: 14px; border: 1px solid #888; border-radius: 2px; flex: none; background: #fff; }
.cb svg { display: block; width: 12px; height: 12px; }
.cb.on { background: #2a7fe6; border-color: #2a7fe6; }
.cb.dis { background: #eee; border-color: #bbb; }
.olbl { margin: 0 8px 0 4px; white-space: nowrap; color: #222; }
.olbl.gr { color: #a8a8a8; }

.qt { border-collapse: collapse; table-layout: fixed; width: 623px; margin-left: 1px; color: #000; }
.c0 { width: 13px; } .c1 { width: 61px; }
.qt tr { height: 19px; }
.qt .h2 { height: 33px; }
.qt td, .qt th { border: 1px solid #000; padding: 0 2px 1px; font-size: 11px; line-height: 14px; letter-spacing: -.6px; font-family: "Liberation Mono", "Noto Sans CJK SC", monospace; font-weight: 400; text-align: right; white-space: nowrap; overflow: hidden; }
.qt thead th { text-align: center; font-size: 12px; letter-spacing: 0; padding: 0; }
.qt thead th.hb { font-size: 13px; font-weight: 700; font-family: "Noto Sans CJK SC", sans-serif; }
.qt .rn, .qt thead .rn { border: 0; border-bottom: 1px solid #dcdcdc; background: #efefef; color: #555; padding: 0; text-align: center; font: 13px/16px "Liberation Sans", sans-serif; letter-spacing: -.5px; overflow: visible; }
.qt .n { text-align: center; padding: 0 0 1px; }
.qt .fl { text-align: center; font-size: 12px; letter-spacing: 0; font-family: "Noto Sans CJK SC", sans-serif; }
.qt .cj { font-family: "Noto Sans CJK SC", sans-serif; font-size: 12px; letter-spacing: 0; }
.qt .sub td { font-weight: 700; }
.qt .tot td { background: #e2e2e2; }

.band { height: 5px; margin-top: 0; flex: none; background: #eee; }
.lower { height: 87px; margin-top: 9px; flex: none; border: 1px solid #ccc; border-radius: 3px; overflow: hidden; display: flex; flex-direction: column; }
.ltitle { height: 23px; line-height: 19px; padding-left: 1px; border-bottom: 1px solid #ccc; flex: none; white-space: nowrap; }
.gridwrap { flex: 1; position: relative; display: flex; }
.dg { border-collapse: collapse; table-layout: fixed; width: 256px; margin-left: 1px; align-self: flex-start; }
.d0 { width: 14px; } .d1 { width: 81px; } .d2 { width: 161px; }
.dg tr { height: 20px; }
.dg th { background: #7db9fb; color: #fff; font-weight: 700; padding: 0; border: 1px solid #a9cdf5; line-height: 16px; }
.dg th.corner { background: #f0f0f0; border: 0; }
.dg td { background: #d2e7fe; color: #333; padding: 0 0 0 4px; border: 1px solid #c8d3de; border-right: 1px solid #8c8c8c; line-height: 16px; }
.dg td:nth-child(2) { border-right: 1px solid #c8d3de; }
.gbar { position: absolute; right: 5px; top: 12px; width: 4px; height: 15px; background: #eaeaea; border-radius: 2px; }
.dfoot { height: 34px; padding: 7px 6px 0 6px; flex: none; display: flex; gap: 7px; }
.fbtn { width: 139px; height: 26px; border: 1px solid #d4d4d4; border-radius: 4px; text-align: center; line-height: 24px; background: #fff; color: #333; }
.fbtn.pri { width: 80px; margin-left: auto; background: #2f80e0; border-color: #2f80e0; color: #fff; }
.rsz { position: absolute; right: 1px; bottom: 1px; width: 9px; height: 9px; }

/* annotation marks */
.mark { position: absolute; border: 3px solid #f8211d; border-radius: 2px; pointer-events: none; }
.m1 { left: 526px; top: 36px; width: 94px; height: 111px; }
.m2 { left: 797px; top: 702px; width: 67px; height: 28px; }
```
